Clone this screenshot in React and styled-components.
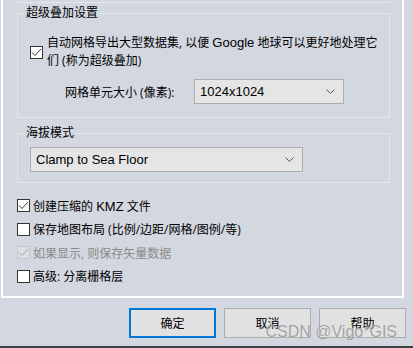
import React from 'react';
import styled, { createGlobalStyle } from 'styled-components';

const GlobalStyle = createGlobalStyle`
  html, body {
    margin: 0;
    padding: 0;
  }
  body {
    background: #d3d7e0;
    font-family: "Open Sans", "Noto Sans CJK SC", sans-serif;
    font-size: 12px;
    color: #000;
  }
`;

const LINE = '#e4e6eb';

const Window = styled.div`
  position: relative;
  width: 413px;
  height: 348px;
  overflow: hidden;
  display: flex;
  flex-direction: column;
  background: #d3d7e0;
`;

const Panel = styled.div`
  margin-left: 1px;
  width: 403px;
  box-sizing: border-box;
  border: 2px solid #fff;
  border-top: none;
  padding: 0 12px 8px 14px;
`;

const PrevGroup = styled.div`
  height: 3px;
  box-sizing: border-box;
  border: 1px solid ${LINE};
  border-top: none;
`;

const Group = styled.fieldset`
  margin: ${(p) => p.$top}px 0 0;
  padding: 0 0 ${(p) => p.$bottom}px 6px;
  border: 1px solid ${LINE};
  min-width: 0;
`;

const GroupTitle = styled.legend`
  padding: 0 2px;
  line-height: 16px;
`;

const GroupBody = styled.div`
  padding: ${(p) => p.$top}px 0 0 6px;
`;

const CheckRow = styled.label`
  display: flex;
  align-items: center;
  gap: ${(p) => p.$gap}px;
  height: ${(p) => (p.$height ? `${p.$height}px` : 'auto')};
  color: ${(p) => (p.$disabled ? '#8a8a8a' : '#000')};
  white-space: nowrap;
`;

const MultiLine = styled.span`
  line-height: 18px;
`;

// Latin runs: the dialog font draws them a little larger than the CJK glyphs
const En = styled.span`
  font-family: "Liberation Sans", Arial, sans-serif;
  font-size: 13px;
`;

const Box = styled.span`
  flex: none;
  width: 13px;
  height: 13px;
  box-sizing: border-box;
  border: 1px solid ${(p) => (p.$disabled ? '#c6c8cc' : '#333')};
  background: ${(p) => (p.$disabled ? '#dcdfe5' : '#fff')};
  display: flex;
  align-items: center;
  justify-content: center;
`;

const FieldRow = styled.div`
  display: flex;
  align-items: center;
  margin-top: 9px;
`;

const FieldLabel = styled.span`
  width: 129px;
  margin-left: 35px;
`;

const Combo = styled.div`
  width: ${(p) => p.$width}px;
  height: 25px;
  box-sizing: border-box;
  border: 1px solid #adadad;
  background: #e5e5e5;
  display: flex;
  align-items: center;
  justify-content: space-between;
  padding: 0 8px 0 5px;
`;

const CheckList = styled.div`
  margin-top: 11px;
  display: flex;
  flex-direction: column;
`;

const ButtonRow = styled.div`
  display: flex;
  justify-content: flex-end;
  gap: 8px;
  margin-top: 10px;
  padding-right: 7px;
`;

const Button = styled.div`
  width: 87px;
  height: 30px;
  box-sizing: border-box;
  border: ${(p) => (p.$default ? '2px solid #0078d7' : '1px solid #adadad')};
  background: #e1e1e1;
  display: flex;
  align-items: center;
  justify-content: center;
`;

const BottomEdge = styled.div`
  margin-top: auto;
  height: 2px;
  background: #3f4042;
`;

const Watermark = styled.div`
  position: absolute;
  right: 16px;
  bottom: 7px;
  font-family: "Liberation Sans", Arial, sans-serif;
  font-size: 16px;
  color: rgba(140, 140, 140, 0.8);
  text-shadow: 0 0 1px rgba(255, 255, 255, 0.6);
  pointer-events: none;
`;

const Check = ({ on, disabled }) => (
  <Box $disabled={disabled}>
    {on && (
      <svg width="11" height="11" viewBox="0 0 11 11">
        <polyline
          points="1,5.5 4,8.5 10,2"
          fill="none"
          stroke={disabled ? '#a8a8a8' : '#333'}
          strokeWidth="1"
        />
      </svg>
    )}
  </Box>
);

const Chevron = () => (
  <svg width="9" height="5" viewBox="0 0 9 5">
    <polyline points="0.5,0.5 4.5,4.5 8.5,0.5" fill="none" stroke="#555" strokeWidth="1" />
  </svg>
);

const options = [
  { key: 'kmz', label: <>创建压缩的 <En>KMZ</En> 文件</>, on: true },
  { key: 'layout', label: '保存地图布局 (比例/边距/网格/图例/等)', on: false },
  { key: 'vector', label: '如果显示, 则保存矢量数据', on: true, disabled: true },
  { key: 'raster', label: '高级: 分离栅格层', on: false },
];

export default function App() {
  return (
    <Window>
      <GlobalStyle />
      <Panel>
        <PrevGroup />
        <Group $top={2} $bottom={13}>
          <GroupTitle>超级叠加设置</GroupTitle>
          <GroupBody $top={13}>
            <CheckRow $gap={4}>
              <Check on />
              <MultiLine>
                自动网格导出大型数据集, 以便 <En>Google</En> 地球可以更好地处理它
                <br />
                们 (称为超级叠加)
              </MultiLine>
            </CheckRow>
            <FieldRow>
              <FieldLabel>网格单元大小 (像素):</FieldLabel>
              <Combo $width={150}>
                <En>1024x1024</En>
                <Chevron />
              </Combo>
            </FieldRow>
          </GroupBody>
        </Group>
        <Group $top={7} $bottom={10}>
          <GroupTitle>海拔模式</GroupTitle>
          <GroupBody $top={6}>
            <Combo $width={273}>
              <En>Clamp to Sea Floor</En>
              <Chevron />
            </Combo>
          </GroupBody>
        </Group>
        <CheckList>
          {options.map((o) => (
            <CheckRow key={o.key} $gap={3} $height={23.5} $disabled={o.disabled}>
              <Check on={o.on} disabled={o.disabled} />
              <span>{o.label}</span>
            </CheckRow>
          ))}
        </CheckList>
      </Panel>
      <ButtonRow>
        <Button $default>确定</Button>
        <Button>取消</Button>
        <Button>帮助</Button>
      </ButtonRow>
      <BottomEdge />
      <Watermark>CSDN @Vigo*GIS</Watermark>
    </Window>
  );
}
